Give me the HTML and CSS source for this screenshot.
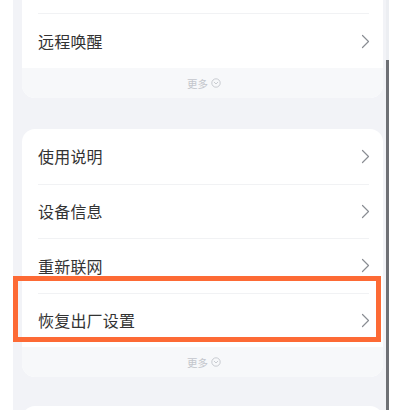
FILE: index.html
```html
<!DOCTYPE html>
<html lang="zh-CN">
<head>
<meta charset="utf-8">
<title>设置</title>
<link rel="stylesheet" href="styles.css">
</head>
<body>
<div class="frame">
  <div class="screen">
    <div class="card card-first">
      <div class="row row-hidden"><div class="row-inner"></div></div>
      <div class="row"><div class="row-inner sep"><span class="label">远程唤醒</span>
        <svg class="chev" width="9" height="15" viewBox="0 0 9 15"><path d="M1.5 1.5 L7.5 7.5 L1.5 13.5" fill="none" stroke="#8a8d93" stroke-width="1.2" stroke-linecap="round" stroke-linejoin="round"/></svg></div></div>
      <div class="more"><span>更多</span>
        <svg class="more-ico" width="10" height="10" viewBox="0 0 10 10"><circle cx="5" cy="5" r="4.2" fill="none" stroke="#c3c6cc" stroke-width="0.9"/><path d="M3.2 4.2 L5 6 L6.8 4.2" fill="none" stroke="#c3c6cc" stroke-width="0.9" stroke-linecap="round" stroke-linejoin="round"/></svg></div>
    </div>

    <div class="card">
      <div class="row"><div class="row-inner"><span class="label">使用说明</span>
        <svg class="chev" width="9" height="15" viewBox="0 0 9 15"><path d="M1.5 1.5 L7.5 7.5 L1.5 13.5" fill="none" stroke="#8a8d93" stroke-width="1.2" stroke-linecap="round" stroke-linejoin="round"/></svg></div></div>
      <div class="row"><div class="row-inner sep"><span class="label">设备信息</span>
        <svg class="chev" width="9" height="15" viewBox="0 0 9 15"><path d="M1.5 1.5 L7.5 7.5 L1.5 13.5" fill="none" stroke="#8a8d93" stroke-width="1.2" stroke-linecap="round" stroke-linejoin="round"/></svg></div></div>
      <div class="row"><div class="row-inner sep"><span class="label">重新联网</span>
        <svg class="chev" width="9" height="15" viewBox="0 0 9 15"><path d="M1.5 1.5 L7.5 7.5 L1.5 13.5" fill="none" stroke="#8a8d93" stroke-width="1.2" stroke-linecap="round" stroke-linejoin="round"/></svg></div></div>
      <div class="row"><div class="row-inner sep"><span class="label">恢复出厂设置</span>
        <svg class="chev" width="9" height="15" viewBox="0 0 9 15"><path d="M1.5 1.5 L7.5 7.5 L1.5 13.5" fill="none" stroke="#8a8d93" stroke-width="1.2" stroke-linecap="round" stroke-linejoin="round"/></svg></div></div>
      <div class="more"><span>更多</span>
        <svg class="more-ico" width="10" height="10" viewBox="0 0 10 10"><circle cx="5" cy="5" r="4.2" fill="none" stroke="#c3c6cc" stroke-width="0.9"/><path d="M3.2 4.2 L5 6 L6.8 4.2" fill="none" stroke="#c3c6cc" stroke-width="0.9" stroke-linecap="round" stroke-linejoin="round"/></svg></div>
    </div>

    <div class="card card-next"></div>
  </div>
  <div class="scrollbar"><div class="thumb"></div></div>
  <div class="highlight"></div>
</div>
</body>
</html>
```

FILE: styles.css
```css
html, body {
  margin: 0;
  padding: 0;
  background: #ffffff;
}
body {
  font-family: "Noto Sans CJK SC", "Noto Sans", sans-serif;
  width: 403px;
  height: 410px;
  overflow: hidden;
}
.frame {
  position: relative;
  display: flex;
  width: 403px;
  height: 410px;
  padding-left: 13px;
  box-sizing: border-box;
}
.screen {
  width: 373px;
  height: 410px;
  background: #f2f3f7;
  padding: 0 3px 0 9px;
  box-sizing: border-box;
  overflow: hidden;
  display: flex;
  flex-direction: column;
}
.card {
  background: #ffffff;
  border-radius: 13px;
  overflow: hidden;
  flex-shrink: 0;
  margin-bottom: 31px;
}
.card-first {
  margin-top: -42px;
}
.card-next {
  height: 60px;
  margin-top: -2px;
}
.row {
  height: 54.5px;
}
.row-hidden {
  height: 55px;
}
.card-first .row {
  height: 55px;
}
.row-inner {
  height: 100%;
  margin: 0 14px 0 16px;
  display: flex;
  align-items: center;
  justify-content: space-between;
  box-sizing: border-box;
}
.sep {
  border-top: 1px solid #f1f2f4;
}
.label {
  font-size: 16px;
  color: #333333;
  letter-spacing: 0.2px;
}
.chev {
  display: block;
  margin-right: -1px;
}
.more {
  height: 30px;
  background: #f7f8fa;
  display: flex;
  align-items: center;
  justify-content: center;
  gap: 3px;
  font-size: 10.5px;
  color: #c3c6cc;
  padding-left: 3px;
}
.more-ico {
  display: block;
}
.scrollbar {
  width: 3px;
  height: 410px;
  background: #eceef2;
  display: flex;
  flex-direction: column;
}
.thumb {
  margin-top: 60px;
  flex: 1;
  background: #6e7075;
}
.highlight {
  position: absolute;
  left: 13px;
  top: 276px;
  width: 368px;
  height: 66px;
  border: 5px solid #fd6a35;
  box-sizing: border-box;
}
```
